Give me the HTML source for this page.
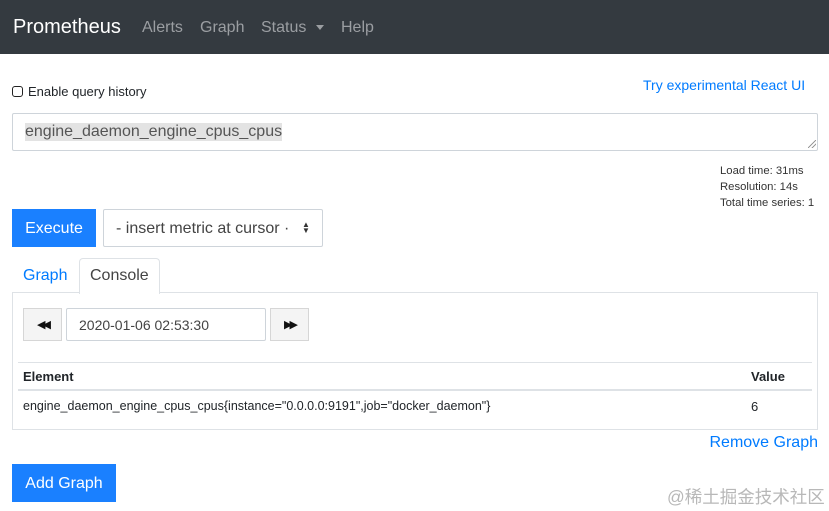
<!DOCTYPE html>
<html><head><meta charset="utf-8"><style>
*{box-sizing:border-box;margin:0;padding:0}
body{width:829px;height:511px;background:#fff;font-family:"Liberation Sans",sans-serif;color:#212529;position:relative;overflow:hidden}
.a{position:absolute;white-space:nowrap}
.nav{position:absolute;left:0;top:0;width:829px;height:54px;background:#343a40}
.blue{color:#007bff}
.btnb{background:#1a80ff;color:#fff;font-size:16px;display:flex;align-items:center;justify-content:center}
.bx{border:1px solid #ced4da;border-radius:2px}
.gb{background:#f4f4f4;border:1px solid #d6d6d6;display:flex;align-items:center;justify-content:center;color:#111}
</style></head><body>
<div class="nav"></div>
<div class="a" style="left:13px;top:16px;font-size:20px;color:#fff">Prometheus</div>
<div class="a" style="left:142px;top:19px;font-size:16px;color:#9b9ea2">Alerts</div>
<div class="a" style="left:200px;top:19px;font-size:16px;color:#9b9ea2">Graph</div>
<div class="a" style="left:261px;top:19px;font-size:16px;color:#9b9ea2">Status</div>
<div class="a" style="left:316px;top:25px;width:0;height:0;border-left:4.5px solid transparent;border-right:4.5px solid transparent;border-top:5px solid #9b9ea2"></div>
<div class="a" style="left:341px;top:19px;font-size:16px;color:#9b9ea2">Help</div>

<div class="a" style="left:12px;top:86px;width:11px;height:11px;border:1.5px solid #222;border-radius:3px"></div>
<div class="a" style="left:28px;top:84px;font-size:13px">Enable query history</div>
<div class="a blue" style="left:643px;top:77px;font-size:14px">Try experimental React UI</div>

<div class="a bx" style="left:12px;top:113px;width:806px;height:38px"></div>
<div class="a" style="left:25px;top:123px;font-size:16px;color:#555;background:#e3e3e3">engine_daemon_engine_cpus_cpus</div>
<div class="a" style="left:808px;top:140px;width:8px;height:8px;background:linear-gradient(135deg,transparent 45%,#999 45%,#999 55%,transparent 55%,transparent 70%,#999 70%,#999 80%,transparent 80%)"></div>

<div class="a" style="left:720px;top:163px;font-size:11.3px;line-height:16px;color:#333">Load time: 31ms<br>Resolution: 14s<br>Total time series: 1</div>

<div class="a btnb" style="left:12px;top:209px;width:84px;height:38px;padding-top:1px">Execute</div>
<div class="a bx" style="left:103px;top:209px;width:220px;height:38px"></div>
<div class="a" style="left:116px;top:220px;font-size:16px;color:#444">- insert metric at cursor ·</div>
<div class="a" style="left:302px;top:222px;font-size:8px;line-height:6px;color:#333">▲<br>▼</div>

<div class="a blue" style="left:23px;top:267px;font-size:16px">Graph</div>
<div class="a" style="left:79px;top:258px;width:81px;height:36px;border:1px solid #dee2e6;border-bottom:none;border-radius:4px 4px 0 0;background:#fff;z-index:2"></div>
<div class="a" style="left:90px;top:267px;font-size:16px;color:#444;z-index:3">Console</div>
<div class="a" style="left:12px;top:292px;width:806px;height:138px;border:1px solid #dee2e6"></div>

<div class="a gb" style="left:23px;top:308px;width:39px;height:33px;font-size:11px;letter-spacing:-3px">◀◀</div>
<div class="a bx" style="left:66px;top:308px;width:200px;height:33px"></div>
<div class="a" style="left:79px;top:317px;font-size:14px;color:#444">2020-01-06 02:53:30</div>
<div class="a gb" style="left:270px;top:308px;width:39px;height:33px;font-size:11px;letter-spacing:-3px">▶▶</div>

<div class="a" style="left:18px;top:362px;width:794px;height:1px;background:#dee2e6"></div>
<div class="a" style="left:23px;top:369px;font-size:13px;font-weight:bold">Element</div>
<div class="a" style="left:751px;top:369px;font-size:13px;font-weight:bold">Value</div>
<div class="a" style="left:18px;top:389px;width:794px;height:2px;background:#dee2e6"></div>
<div class="a" style="left:23px;top:399px;font-size:12.5px">engine_daemon_engine_cpus_cpus{instance="0.0.0.0:9191",job="docker_daemon"}</div>
<div class="a" style="left:751px;top:399px;font-size:13px">6</div>

<div class="a blue" style="right:11px;top:434px;font-size:16px">Remove Graph</div>
<div class="a btnb" style="left:12px;top:464px;width:104px;height:38px;padding-top:2px">Add Graph</div>
<div class="a" style="left:667px;top:484px;font-size:17.5px;color:#b8b8b8;font-family:'Liberation Sans','Noto Sans CJK SC',sans-serif">@稀土掘金技术社区</div>
</body></html>
